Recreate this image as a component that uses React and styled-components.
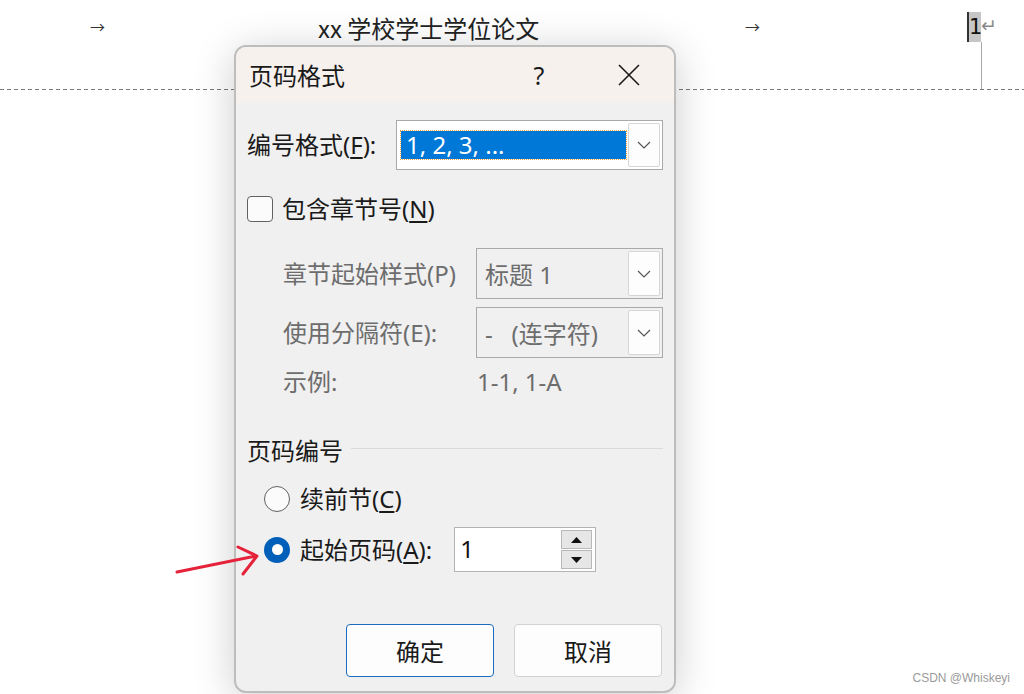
import React from "react";
import styled, { createGlobalStyle } from "styled-components";

const GlobalStyle = createGlobalStyle`
  html, body {
    margin: 0;
    padding: 0;
    background: #ffffff;
  }
  body {
    font-family: "Noto Sans", "Noto Sans CJK SC", sans-serif;
  }
`;

const UI_FONT = `"Noto Sans", "Noto Sans CJK SC", sans-serif`;

const Page = styled.div`
  position: relative;
  width: 1024px;
  height: 694px;
  overflow: hidden;
  background: #ffffff;
`;

const HeaderBar = styled.div`
  display: grid;
  grid-template-columns: 228px 427px 222px 1fr;
  align-items: start;
  height: 89px;
  padding-left: 90px;
  box-sizing: border-box;
  font-family: "Noto Sans CJK SC", sans-serif;
  color: #222;
`;

const TabArrow = styled.span`
  display: block;
  margin-top: 14px;
  font-size: 15px;
  line-height: 26px;
  color: #333;
`;

const DocTitle = styled.span`
  display: block;
  margin-top: 12px;
  font-size: 24px;
  line-height: 32px;
  color: #222;
`;

const PageMark = styled.div`
  display: flex;
  flex-direction: column;
  margin-top: 12px;
`;

const PageNumRow = styled.div`
  display: flex;
  align-items: center;
  height: 30px;
`;

const PageNum = styled.span`
  display: block;
  width: 12px;
  height: 30px;
  background: #c6c6c6;
  border-left: 2px solid #333;
  font-family: "DejaVu Sans", sans-serif;
  font-size: 21px;
  line-height: 30px;
  color: #111;
  text-align: center;
`;

const ReturnMark = styled.span`
  font-family: "DejaVu Sans", sans-serif;
  font-size: 19px;
  line-height: 24px;
  color: #8a8a8a;
  margin-left: 0;
  margin-top: -4px;
`;

const MarginLine = styled.div`
  width: 1px;
  height: 47px;
  margin-left: 14px;
  background: #a8a8a8;
`;

const DashedRule = styled.div`
  height: 1px;
  background: repeating-linear-gradient(
    to right,
    #7a7a7a 0 4px,
    transparent 4px 7px
  );
`;

const Dialog = styled.div`
  position: absolute;
  left: 234px;
  top: 45px;
  width: 442px;
  height: 648px;
  box-sizing: border-box;
  border: 2px solid #bdbdbd;
  border-radius: 12px;
  overflow: hidden;
  background: #f0f0f0;
  box-shadow: 0 6px 42px rgba(0, 0, 0, 0.2);
  font-family: ${UI_FONT};
  color: #1a1a1a;
`;

const TitleBar = styled.div`
  display: flex;
  align-items: center;
  height: 56px;
  padding-left: 13px;
  background: #f7f1ee;
`;

const TitleText = styled.span`
  flex: 1;
  font-size: 24px;
  line-height: 32px;
  font-family: "Noto Sans CJK SC", sans-serif;
`;

const TitleButton = styled.span`
  display: flex;
  align-items: center;
  justify-content: center;
  width: 90px;
  height: 56px;
  font-size: 25px;
  color: #1a1a1a;
`;

const Body = styled.div`
  display: flex;
  flex-direction: column;
  padding: 0 11px 0 11px;
`;

const FieldRow = styled.div`
  display: flex;
  align-items: center;
  justify-content: space-between;
  height: ${(p) => p.h || 50}px;
  margin-top: ${(p) => p.mt || 0}px;
`;

const Label = styled.span`
  font-size: 24px;
  line-height: 32px;
  white-space: nowrap;
  color: ${(p) => (p.disabled ? "#6d6d6d" : "#1a1a1a")};
`;

const Key = styled.u`
  text-decoration-thickness: 1.5px;
  text-underline-offset: 3px;
`;

const Combo = styled.div`
  display: flex;
  align-items: stretch;
  width: ${(p) => p.w}px;
  height: ${(p) => p.h}px;
  box-sizing: border-box;
  border: 1.5px solid #a9a9a9;
  background: ${(p) => (p.disabled ? "#f0f0f0" : "#ffffff")};
  padding: 2px;
`;

const ComboValue = styled.div`
  flex: 1;
  display: flex;
  align-items: center;
  padding-left: 6px;
  font-size: 24px;
  white-space: pre;
  color: ${(p) => (p.disabled ? "#6d6d6d" : "#1a1a1a")};
`;

const Selection = styled.div`
  flex: 1;
  display: flex;
  align-items: center;
  margin: 8px 2px 8px 2px;
  padding-left: 5px;
  background: #0078d7;
  outline: 1px dotted #f0a040;
  color: #ffffff;
  font-size: 24px;
  line-height: 30px;
`;

const DropButton = styled.div`
  display: flex;
  align-items: center;
  justify-content: center;
  width: 32px;
  box-sizing: border-box;
  border: 1px solid #d6d6d6;
  border-radius: 2px;
  background: #fdfdfd;
`;

const Chevron = () => (
  <svg width="14" height="8" viewBox="0 0 14 8">
    <path d="M1 1 L7 7 L13 1" fill="none" stroke="#555" strokeWidth="1.2" />
  </svg>
);

const CheckRow = styled.div`
  display: flex;
  align-items: center;
  gap: 9px;
  height: 34px;
  margin-top: 22px;
`;

const CheckBox = styled.span`
  width: 26px;
  height: 26px;
  box-sizing: border-box;
  border: 1.5px solid #616161;
  border-radius: 4px;
  background: #fbfbfb;
`;

const SubGrid = styled.div`
  display: grid;
  grid-template-columns: 193px 187px;
  grid-auto-rows: auto;
  row-gap: 8px;
  padding-left: 36px;
  margin-top: 22px;
  align-items: center;
`;

const ExampleValue = styled.span`
  padding-left: 1px;
  font-size: 24px;
  line-height: 32px;
  color: #6d6d6d;
`;

const SectionHead = styled.div`
  display: flex;
  align-items: center;
  gap: 8px;
  height: 32px;
  margin-top: 37px;
`;

const SectionLine = styled.div`
  flex: 1;
  height: 1px;
  margin-top: -6px;
  background: #dadada;
`;

const RadioRow = styled.div`
  display: flex;
  align-items: center;
  height: ${(p) => p.h}px;
  margin-top: ${(p) => p.mt}px;
  padding-left: 17px;
`;

const Radio = styled.span`
  display: flex;
  align-items: center;
  justify-content: center;
  width: 26px;
  height: 26px;
  margin-right: 10px;
  box-sizing: border-box;
  border-radius: 50%;
  border: ${(p) => (p.checked ? "none" : "1.5px solid #616161")};
  background: ${(p) => (p.checked ? "#005fb8" : "#fbfbfb")};

  &::after {
    content: "";
    display: ${(p) => (p.checked ? "block" : "none")};
    width: 11px;
    height: 11px;
    border-radius: 50%;
    background: #ffffff;
  }
`;

const Spin = styled.div`
  display: flex;
  width: 142px;
  height: 45px;
  margin-left: 22px;
  box-sizing: border-box;
  border: 1.5px solid #b4b4b4;
  background: #ffffff;
  padding: 2px 3px 2px 0;
`;

const SpinValue = styled.span`
  flex: 1;
  padding-left: 5px;
  font-size: 24px;
  line-height: 38px;
  color: #111;
`;

const SpinButtons = styled.div`
  display: flex;
  flex-direction: column;
  gap: 1px;
  width: 31px;
`;

const SpinButton = styled.div`
  flex: 1;
  display: flex;
  align-items: center;
  justify-content: center;
  box-sizing: border-box;
  border: 1px solid #b8b8b8;
  background: #e6e6e6;
`;

const Tri = ({ up }) => (
  <svg width="11" height="6" viewBox="0 0 11 6">
    <path d={up ? "M0 6 L5.5 0 L11 6 Z" : "M0 0 L5.5 6 L11 0 Z"} fill="#111" />
  </svg>
);

const ButtonRow = styled.div`
  display: flex;
  justify-content: flex-end;
  gap: 20px;
  margin-top: 52px;
  padding-right: 1px;
`;

const DialogButton = styled.button`
  width: 148px;
  height: 53px;
  box-sizing: border-box;
  border-radius: 4px;
  border: 1.5px solid ${(p) => (p.primary ? "#1a6cc0" : "#d2d2d2")};
  background: #fdfdfd;
  font-family: "Noto Sans CJK SC", sans-serif;
  font-size: 24px;
  color: #1a1a1a;
  padding: 0;
`;

const Watermark = styled.span`
  position: absolute;
  right: 14px;
  bottom: 9px;
  font-family: "Liberation Sans", Arial, sans-serif;
  font-size: 12px;
  color: #9a9a9a;
`;

const Pointer = styled.svg`
  position: absolute;
  left: 170px;
  top: 535px;
`;

export default function App() {
  return (
    <Page>
      <GlobalStyle />
      <HeaderBar>
        <TabArrow>→</TabArrow>
        <DocTitle>xx 学校学士学位论文</DocTitle>
        <TabArrow>→</TabArrow>
        <PageMark>
          <PageNumRow>
            <PageNum>1</PageNum>
            <ReturnMark>↵</ReturnMark>
          </PageNumRow>
          <MarginLine />
        </PageMark>
      </HeaderBar>
      <DashedRule />

      <Dialog>
        <TitleBar>
          <TitleText>页码格式</TitleText>
          <TitleButton>?</TitleButton>
          <TitleButton>
            <svg width="22" height="22" viewBox="0 0 22 22">
              <path d="M1 1 L21 21 M21 1 L1 21" stroke="#1a1a1a" strokeWidth="1.6" />
            </svg>
          </TitleButton>
        </TitleBar>
        <Body>
          <FieldRow mt={17} h={50}>
            <Label>
              编号格式(<Key>F</Key>):
            </Label>
            <Combo w={267} h={50}>
              <Selection>1, 2, 3, ...</Selection>
              <DropButton>
                <Chevron />
              </DropButton>
            </Combo>
          </FieldRow>

          <CheckRow>
            <CheckBox />
            <Label>
              包含章节号(<Key>N</Key>)
            </Label>
          </CheckRow>

          <SubGrid>
            <Label disabled>章节起始样式(P)</Label>
            <Combo w={187} h={51} disabled>
              <ComboValue disabled>标题 1</ComboValue>
              <DropButton>
                <Chevron />
              </DropButton>
            </Combo>
            <Label disabled>使用分隔符(E):</Label>
            <Combo w={187} h={51} disabled>
              <ComboValue disabled>{"-   (连字符)"}</ComboValue>
              <DropButton>
                <Chevron />
              </DropButton>
            </Combo>
            <Label disabled>示例:</Label>
            <ExampleValue>1-1, 1-A</ExampleValue>
          </SubGrid>

          <SectionHead>
            <Label>页码编号</Label>
            <SectionLine />
          </SectionHead>

          <RadioRow mt={16} h={32}>
            <Radio />
            <Label>
              续前节(<Key>C</Key>)
            </Label>
          </RadioRow>

          <RadioRow mt={12} h={45}>
            <Radio checked />
            <Label>
              起始页码(<Key>A</Key>):
            </Label>
            <Spin>
              <SpinValue>1</SpinValue>
              <SpinButtons>
                <SpinButton>
                  <Tri up />
                </SpinButton>
                <SpinButton>
                  <Tri />
                </SpinButton>
              </SpinButtons>
            </Spin>
          </RadioRow>

          <ButtonRow>
            <DialogButton primary>确定</DialogButton>
            <DialogButton>取消</DialogButton>
          </ButtonRow>
        </Body>
      </Dialog>

      <Pointer width="100" height="50" viewBox="0 0 100 50">
        <path
          d="M7 37 L86 21 M68 12 L87 21 L73 39"
          fill="none"
          stroke="#e5223a"
          strokeWidth="3"
          strokeLinecap="round"
          strokeLinejoin="round"
        />
      </Pointer>

      <Watermark>CSDN @Whiskeyi</Watermark>
    </Page>
  );
}
